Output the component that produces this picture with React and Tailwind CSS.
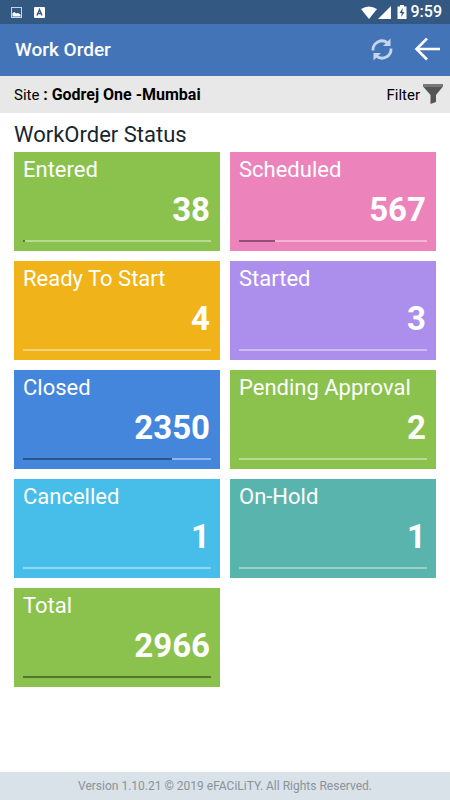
import React from "react";

const cards = [
  { label: "Entered", count: 38, color: "bg-[#8bc24d]", fill: "bg-[#54752e]" },
  { label: "Scheduled", count: 567, color: "bg-[#ec84bb]", fill: "bg-[#955078]" },
  { label: "Ready To Start", count: 4, color: "bg-[#f0b319]", fill: "bg-[#906b0f]" },
  { label: "Started", count: 3, color: "bg-[#ac8eed]", fill: "bg-[#67558e]" },
  { label: "Closed", count: 2350, color: "bg-[#4586dd]", fill: "bg-[#2b568c]" },
  { label: "Pending Approval", count: 2, color: "bg-[#8bc24d]", fill: "bg-[#54752e]" },
  { label: "Cancelled", count: 1, color: "bg-[#47bdea]", fill: "bg-[#2b718c]" },
  { label: "On-Hold", count: 1, color: "bg-[#5ab4ae]", fill: "bg-[#366c68]" },
  { label: "Total", count: 2966, color: "bg-[#8bc24d]", fill: "bg-[#54752e]" },
];

const total = 2966;

const StatusBar = () => (
  <div className="flex h-6 items-center justify-between bg-[#335882] pl-[11px] pr-2 text-white">
    <div className="flex items-center gap-3">
      <svg width="11" height="11" viewBox="0 0 11 11">
        <rect x="0.5" y="0.5" width="10" height="10" fill="none" stroke="#c9d5e2" />
        <path d="M1.500 9.500V6L3.500 5L5 6.500L7 6L9.500 7.500V9.500Z" fill="white" />
      </svg>
      <svg width="11" height="11" viewBox="0 0 11 11">
        <rect width="11" height="11" rx="1" fill="white" />
        <path d="M3 8.5L5.5 2.5L8 8.5M4 6.5H7" fill="none" stroke="#335882" strokeWidth="1.4" />
      </svg>
    </div>
    <div className="flex items-center">
      <svg width="16" height="13" viewBox="0 0 16 13">
        <path d="M0 3Q8 -2 16 3L8 13Z" fill="white" />
      </svg>
      <svg className="ml-px" width="13" height="13" viewBox="0 0 13 13">
        <path d="M13 0V13H0Z" fill="white" />
      </svg>
      <svg className="ml-1.5" width="10" height="14" viewBox="0 0 10 14">
        <path d="M3 0H7V1.500H9.500V14H0.500V1.500H3Z" fill="white" />
        <path d="M5.800 3L2.500 8H4.700L4.200 12L7.500 7H5.300Z" fill="#335882" />
      </svg>
      <span className="ml-1 text-[16px] leading-6 font-medium">9:59</span>
    </div>
  </div>
);

const Header = () => (
  <header className="flex h-[52px] items-center justify-between bg-[#4374b8] pl-[15px] pr-2.5 text-white">
    <h1 className="text-[19px] leading-6 font-medium">Work Order</h1>
    <div className="flex items-center gap-5">
      <button type="button" aria-label="Refresh">
        <svg className="block" width="24" height="24" viewBox="0 0 24 24" fill="none" stroke="#c5d5ec" strokeWidth="2.800">
          <path d="M3 12.500A9 9 0 0 1 17.500 4.800" />
          <path d="M21 10.500A9 9 0 0 1 6.500 18.200" />
          <path d="M20.500 0.500V8H13Z" fill="#c5d5ec" stroke="none" />
          <path d="M3.500 22.500V15H11Z" fill="#c5d5ec" stroke="none" />
        </svg>
      </button>
      <button type="button" aria-label="Back">
        <svg className="block" width="26" height="24" viewBox="0 0 26 24" fill="none" stroke="white" strokeWidth="2.600">
          <path d="M13 0.500L2.500 11L13 21.500M2.500 11H26" />
        </svg>
      </button>
    </div>
  </header>
);

const StatusCard = ({ label, count, color, fill }) => (
  <div className={`flex h-[99px] flex-col px-[9px] text-white ${color}`}>
    <h3 className="pt-1 text-[22px] leading-7">{label}</h3>
    <p className="pt-1.5 pr-px text-right text-[33px] leading-10 font-bold">{count}</p>
    <div className="mt-2.5 h-0.5 bg-white/40">
      <div className={`h-full ${fill}`} style={{ width: `${Math.floor((count / total) * 100)}%` }} />
    </div>
  </div>
);

const App = () => {
  return (
    <div className="flex min-h-screen flex-col bg-white font-['Roboto',sans-serif]">
      <StatusBar />
      <Header />
      <div className="flex h-[37px] items-center justify-between bg-[#e8e8e8] pl-3.5 pr-1.5 text-black">
        <p className="text-[15px] leading-6">
          Site <b className="text-[16px]">: Godrej One -Mumbai</b>
        </p>
        <button type="button" className="flex items-center gap-0.5 text-[15px] leading-6">
          Filter
          <svg width="22" height="22" viewBox="0 0 22 22">
            <path d="M1 0H21V3H1Z" fill="#777" />
            <path d="M1.500 3H20.500L14 11V18L8.500 20V11Z" fill="#555" />
          </svg>
        </button>
      </div>
      <main className="flex-1 px-3.5 pt-1.5">
        <h2 className="text-[22px] leading-8 text-[#17252d]">WorkOrder Status</h2>
        <div className="mt-px grid grid-cols-2 gap-2.5">
          {cards.map((card) => (
            <StatusCard key={card.label} {...card} />
          ))}
        </div>
      </main>
      <footer className="bg-[#d9e1e9] text-center text-[12px] leading-7 text-[#8a9399]">
        Version 1.10.21 © 2019 eFACiLiTY. All Rights Reserved.
      </footer>
    </div>
  );
};

export default App;
